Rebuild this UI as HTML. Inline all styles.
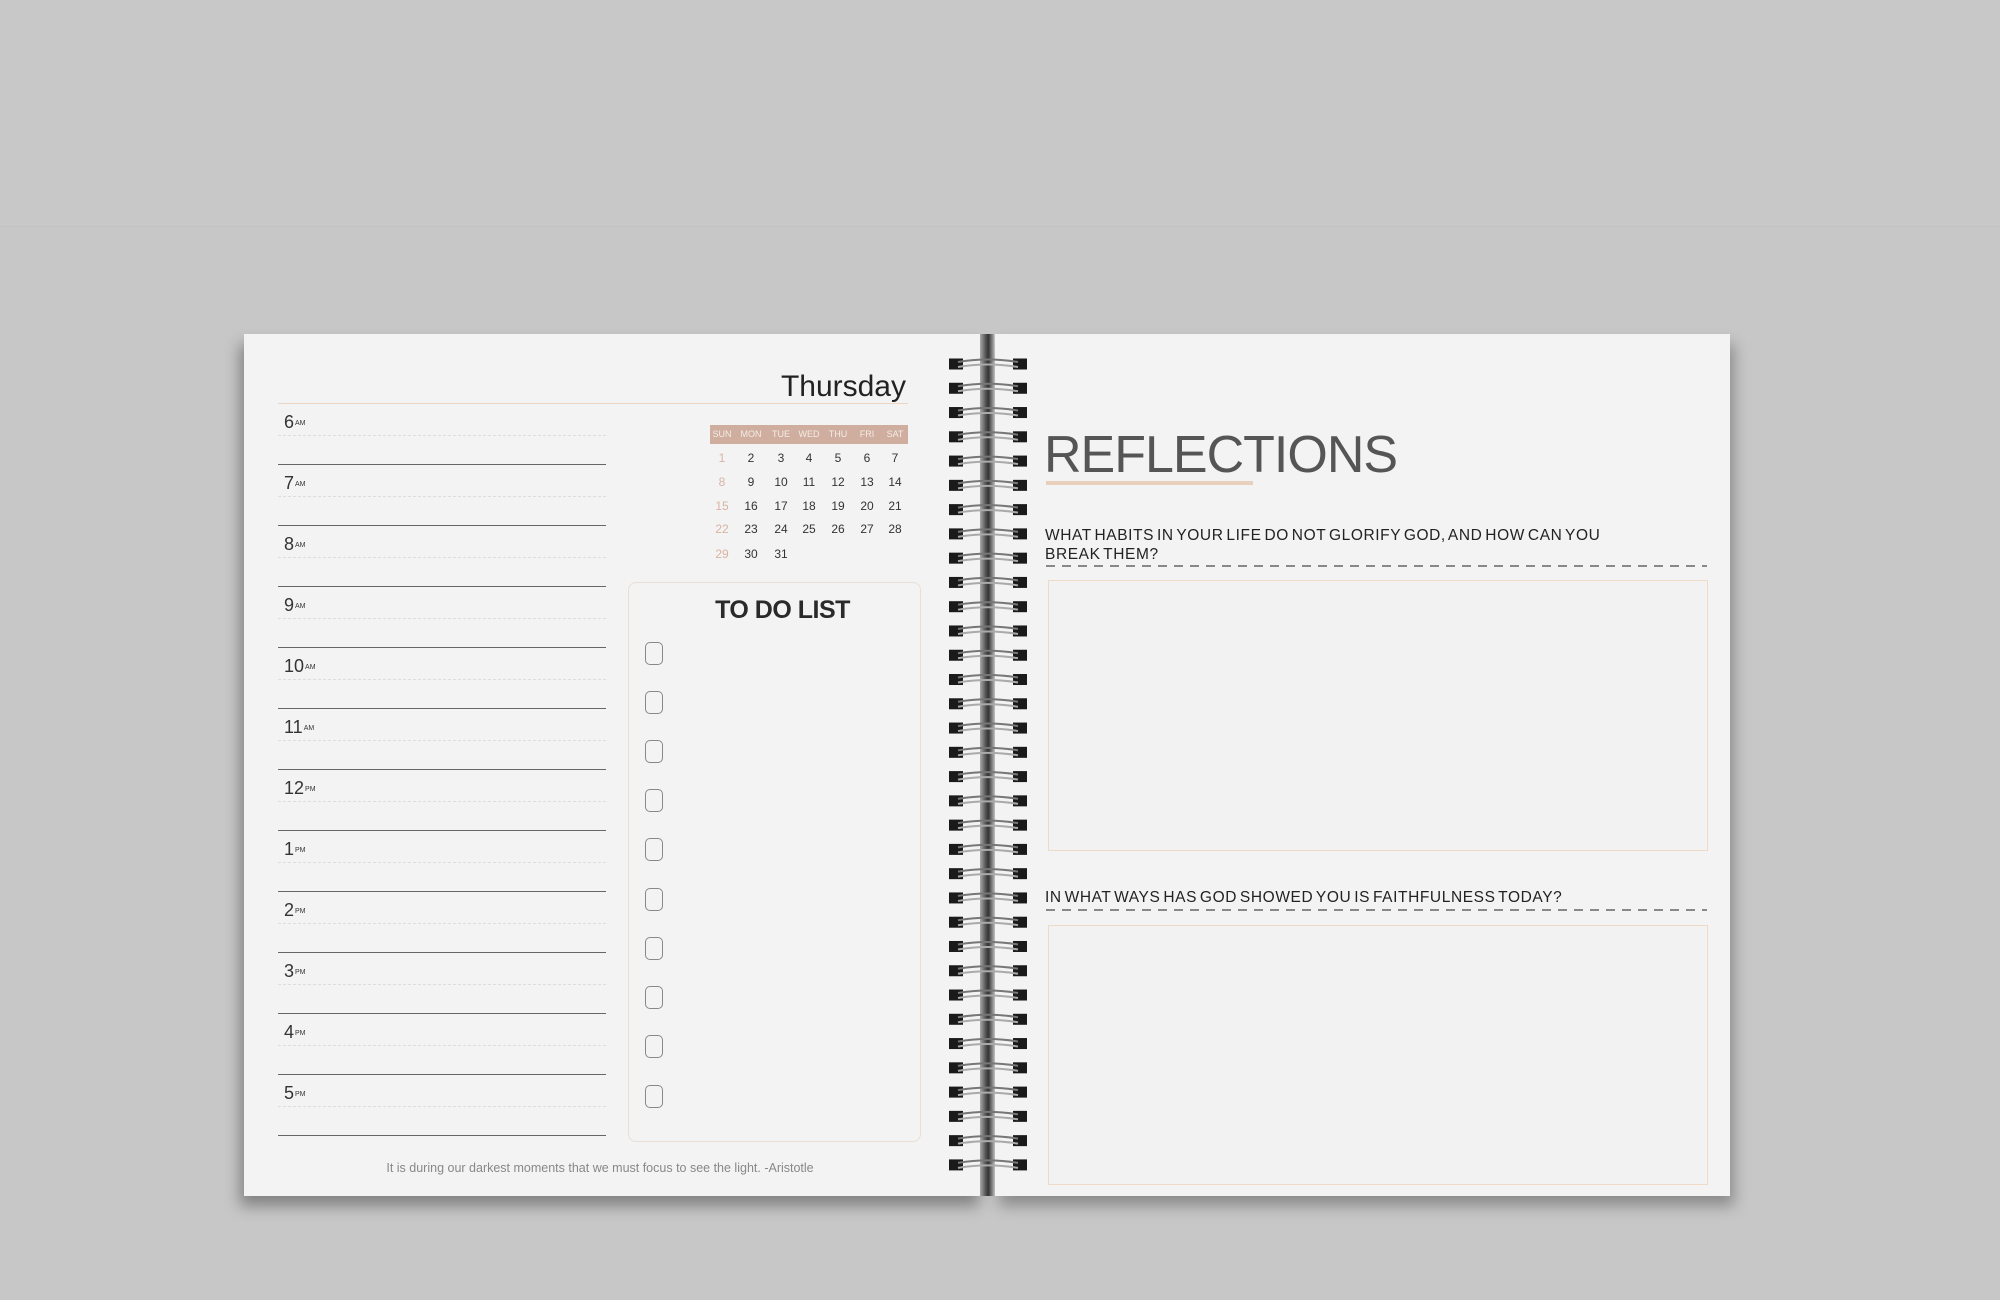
<!DOCTYPE html>
<html><head><meta charset="utf-8"><style>
*{margin:0;padding:0;box-sizing:border-box}
body{width:2000px;height:1300px;background:#c7c7c7;position:relative;overflow:hidden;font-family:"Liberation Sans",sans-serif}
.top{position:absolute;left:0;top:0;width:2000px;height:227px;background:#c8c8c8;border-bottom:1px solid #c2c2c2}
.page{position:absolute;top:334px;height:862px;background:#f3f3f3}
.lp{left:244px;width:739px;box-shadow:-4px 10px 14px rgba(0,0,0,.35)}
.rp{left:995px;width:735px;box-shadow:4px 10px 14px rgba(0,0,0,.3)}
.abs{position:absolute}
.hour{position:absolute;left:284px;font-size:18px;color:#333}
.hour small{font-size:7px;vertical-align:3px;margin-left:1px}
.dash{position:absolute;left:278px;width:328px;border-top:1px dashed #ddd}
.solid{position:absolute;left:278px;width:328px;border-top:1.5px solid #666}
.cal{position:absolute;font-size:12px;color:#333;text-align:center;width:28px;margin-left:-14px}
.cb{position:absolute;left:645px;width:18px;height:23px;border:1.5px solid #888;border-radius:5px}
.q{position:absolute;left:1045px;font-size:15.5px;color:#222;letter-spacing:0.6px;line-height:19px;word-spacing:-2px}
.qd{position:absolute;left:1046px;width:661px;height:1.5px;background:repeating-linear-gradient(90deg,#888 0 9px,transparent 9px 16px)}
.box{position:absolute;left:1048px;width:660px;border:1.5px solid #efd9c7;background:#f2f2f2}
</style></head><body>
<div class="top"></div>
<div class="page lp"></div>
<div class="page rp"></div>
<div class="abs" style="left:980px;top:334px;width:14px;height:862px;background:linear-gradient(90deg,#aaa,#555 40%,#333 60%,#aaa)"></div>

<div class="abs" style="right:1094px;top:370px;font-size:30px;color:#222">Thursday</div>
<div class="abs" style="left:278px;top:403px;width:630px;border-top:1.5px solid #ecd5c3"></div>

<div class="hour" style="top:412px">6<small>AM</small></div>
<div class="hour" style="top:473px">7<small>AM</small></div>
<div class="hour" style="top:534px">8<small>AM</small></div>
<div class="hour" style="top:595px">9<small>AM</small></div>
<div class="hour" style="top:656px">10<small>AM</small></div>
<div class="hour" style="top:717px">11<small>AM</small></div>
<div class="hour" style="top:778px">12<small>PM</small></div>
<div class="hour" style="top:839px">1<small>PM</small></div>
<div class="hour" style="top:900px">2<small>PM</small></div>
<div class="hour" style="top:961px">3<small>PM</small></div>
<div class="hour" style="top:1022px">4<small>PM</small></div>
<div class="hour" style="top:1083px">5<small>PM</small></div>

<div class="dash" style="top:435px"></div><div class="solid" style="top:464px"></div>
<div class="dash" style="top:496px"></div><div class="solid" style="top:525px"></div>
<div class="dash" style="top:557px"></div><div class="solid" style="top:586px"></div>
<div class="dash" style="top:618px"></div><div class="solid" style="top:647px"></div>
<div class="dash" style="top:679px"></div><div class="solid" style="top:708px"></div>
<div class="dash" style="top:740px"></div><div class="solid" style="top:769px"></div>
<div class="dash" style="top:801px"></div><div class="solid" style="top:830px"></div>
<div class="dash" style="top:862px"></div><div class="solid" style="top:891px"></div>
<div class="dash" style="top:923px"></div><div class="solid" style="top:952px"></div>
<div class="dash" style="top:984px"></div><div class="solid" style="top:1013px"></div>
<div class="dash" style="top:1045px"></div><div class="solid" style="top:1074px"></div>
<div class="dash" style="top:1106px"></div><div class="solid" style="top:1135px"></div>

<div class="abs" style="left:710px;top:425px;width:198px;height:19px;background:#cfae9f"></div>
<div id="cal"></div>

<div class="abs" style="left:628px;top:582px;width:293px;height:560px;border:1px solid #eadfd6;border-radius:8px"></div>
<div class="abs" style="left:636px;width:293px;top:596px;text-align:center;font-size:25px;font-weight:bold;color:#2a2a2a;letter-spacing:-0.5px">TO DO LIST</div>
<div class="cb" style="top:642px"></div><div class="cb" style="top:691px"></div><div class="cb" style="top:740px"></div><div class="cb" style="top:789px"></div><div class="cb" style="top:838px"></div><div class="cb" style="top:888px"></div><div class="cb" style="top:937px"></div><div class="cb" style="top:986px"></div><div class="cb" style="top:1035px"></div><div class="cb" style="top:1085px"></div>

<div class="abs" style="left:280px;width:640px;top:1161px;text-align:center;font-size:12.5px;color:#888">It is during our darkest moments that we must focus to see the light. -Aristotle</div>

<div class="abs" style="left:1044px;top:425px;font-size:52px;color:#555;letter-spacing:-1px">REFLECTIONS</div>
<div class="abs" style="left:1046px;top:481px;width:207px;height:4px;background:#e8d0bd"></div>
<div class="q" style="top:526px">WHAT HABITS IN YOUR LIFE DO NOT GLORIFY GOD, AND HOW CAN YOU<br>BREAK THEM?</div>
<div class="qd" style="top:565px"></div>
<div class="box" style="top:580px;height:271px"></div>
<div class="q" style="top:888px">IN WHAT WAYS HAS GOD SHOWED YOU IS FAITHFULNESS TODAY?</div>
<div class="qd" style="top:909px"></div>
<div class="box" style="top:925px;height:260px"></div>

<svg class="abs" style="left:0;top:0" width="2000" height="1300" id="coils"></svg>
<script>
var s='';
for(var i=0;i<34;i++){var y=364+i*24.27;
s+='<rect x="949" y="'+(y-5.5)+'" width="14" height="11" fill="#1a1a1a"/>';
s+='<rect x="1013" y="'+(y-5.5)+'" width="14" height="11" fill="#1a1a1a"/>';
s+='<path d="M958 '+(y-2)+' Q988 '+(y-7)+' 1018 '+(y-2)+'" stroke="#777" stroke-width="2" fill="none"/>';
s+='<path d="M958 '+(y+3)+' Q988 '+(y-2)+' 1018 '+(y+3)+'" stroke="#aaa" stroke-width="2" fill="none"/>';}
document.getElementById('coils').innerHTML=s;
var c='',xs=[722,751,781,809,838,867,895],hd=['SUN','MON','TUE','WED','THU','FRI','SAT'];
for(var j=0;j<7;j++)c+='<div class="cal" style="left:'+xs[j]+'px;top:429px;font-size:9px;color:#f5ece6">'+hd[j]+'</div>';
var ys=[451,475,499,522,547];
for(var d=1;d<=31;d++){var r=Math.floor((d-1)/7),col=(d-1)%7;
c+='<div class="cal" style="left:'+xs[col]+'px;top:'+ys[r]+'px;color:'+(col==0?'#d8b3a3':'#333')+'">'+d+'</div>';}
document.getElementById('cal').innerHTML=c;
</script>
</body></html>
